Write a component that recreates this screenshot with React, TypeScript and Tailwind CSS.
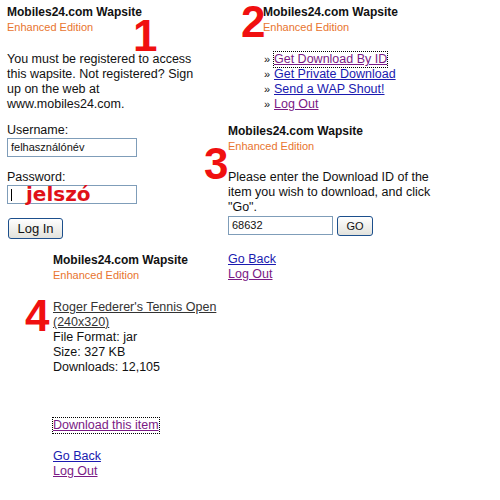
const ORANGE = 'text-[#e8742e]'

function Header() {
  return (
    <div>
      <div className="text-[12px] leading-[15px] font-bold text-[#111]">Mobiles24.com Wapsite</div>
      <div className={`text-[11px] leading-[14px] ${ORANGE}`}>Enhanced Edition</div>
    </div>
  )
}

function Num({ n, className }: { n: string; className: string }) {
  return (
    <div className={`absolute text-[44px] leading-[32px] font-bold text-[#f01010] ${className}`}>{n}</div>
  )
}

const btn = 'border border-[#1c4f8c] rounded-[3px] bg-gradient-to-b from-white to-[#e2e2dc] text-[#111] leading-none'
const field = 'border border-[#7f9db9] bg-white text-[11px] px-[3px] flex items-center'
const blue = 'text-[#1a1ab0] underline'
const purple = 'text-[#7a1a85] underline'

export default function App() {
  return (
    <div className="relative w-[500px] h-[500px] bg-white overflow-hidden text-[12.5px] leading-[15px] text-[#111]" style={{ fontFamily: '"Liberation Sans", Arial, sans-serif' }}>
      {/* 1: login */}
      <div className="absolute left-[7px] top-[5px] w-[200px]">
        <Header />
        <p className="mt-[18px]">You must be registered to access this wapsite. Not registered? Sign up on the web at www.mobiles24.com.</p>
        <div className="mt-[11px]">Username:</div>
        <div className={`${field} w-[130px] h-[19px]`}>felhasználónév</div>
        <div className="mt-[13px]">Password:</div>
        <div className={`${field} w-[130px] h-[19px] relative`}>
          <span className="w-px h-[12px] bg-black" />
          <span className="absolute left-[18px] -top-[4px] text-[20px] leading-[24px] font-bold text-[#e01018]" style={{ fontFamily: '"DejaVu Sans", sans-serif' }}>jelszó</span>
        </div>
        <button className={`${btn} mt-[14px] ml-px w-[55px] h-[21px] text-[13px]`}>Log In</button>
      </div>
      <Num n="1" className="left-[133px] top-[20px]" />

      {/* 2: menu */}
      <div className="absolute left-[263px] top-[5px]">
        <Header />
        <ul className="mt-[18px] space-y-0">
          {[
            ['Get Download By ID', purple + ' outline-1 outline-dotted outline-black'],
            ['Get Private Download', blue],
            ['Send a WAP Shout!', blue],
            ['Log Out', purple],
          ].map(([t, c]) => (
            <li key={t} className="flex items-baseline">
              <span className="text-[11px] w-[10px] ml-px">»</span>
              <a href="#" className={c}>{t}</a>
            </li>
          ))}
        </ul>
      </div>
      <Num n="2" className="left-[241px] top-[6px]" />

      {/* 3: download by id */}
      <div className="absolute left-[228px] top-[124px] w-[205px]">
        <Header />
        <p className="mt-[17px]">Please enter the Download ID of the item you wish to download, and click "Go".</p>
        <div className="mt-[1px] flex gap-[4px]">
          <div className={`${field} w-[105px] h-[19px]`}>68632</div>
          <button className={`${btn} w-[36px] h-[20px] text-[11px]`}>GO</button>
        </div>
        <div className="mt-[16px] flex flex-col items-start">
          <a href="#" className={blue}>Go Back</a>
          <a href="#" className={purple}>Log Out</a>
        </div>
      </div>
      <Num n="3" className="left-[204px] top-[148px]" />

      {/* 4: item */}
      <div className="absolute left-[53px] top-[253px] w-[170px]">
        <Header />
        <a href="#" className="block mt-[18px] text-[#333] underline">Roger Federer's Tennis Open (240x320)</a>
        <div>File Format: jar</div>
        <div>Size: 327 KB</div>
        <div>Downloads: 12,105</div>
        <div className="mt-[43px] flex flex-col items-start">
          <a href="#" className={purple + ' outline-1 outline-dotted outline-black'}>Download this item</a>
          <a href="#" className={`${blue} mt-[16px]`}>Go Back</a>
          <a href="#" className={purple}>Log Out</a>
        </div>
      </div>
      <Num n="4" className="left-[25px] top-[300px]" />
    </div>
  )
}
